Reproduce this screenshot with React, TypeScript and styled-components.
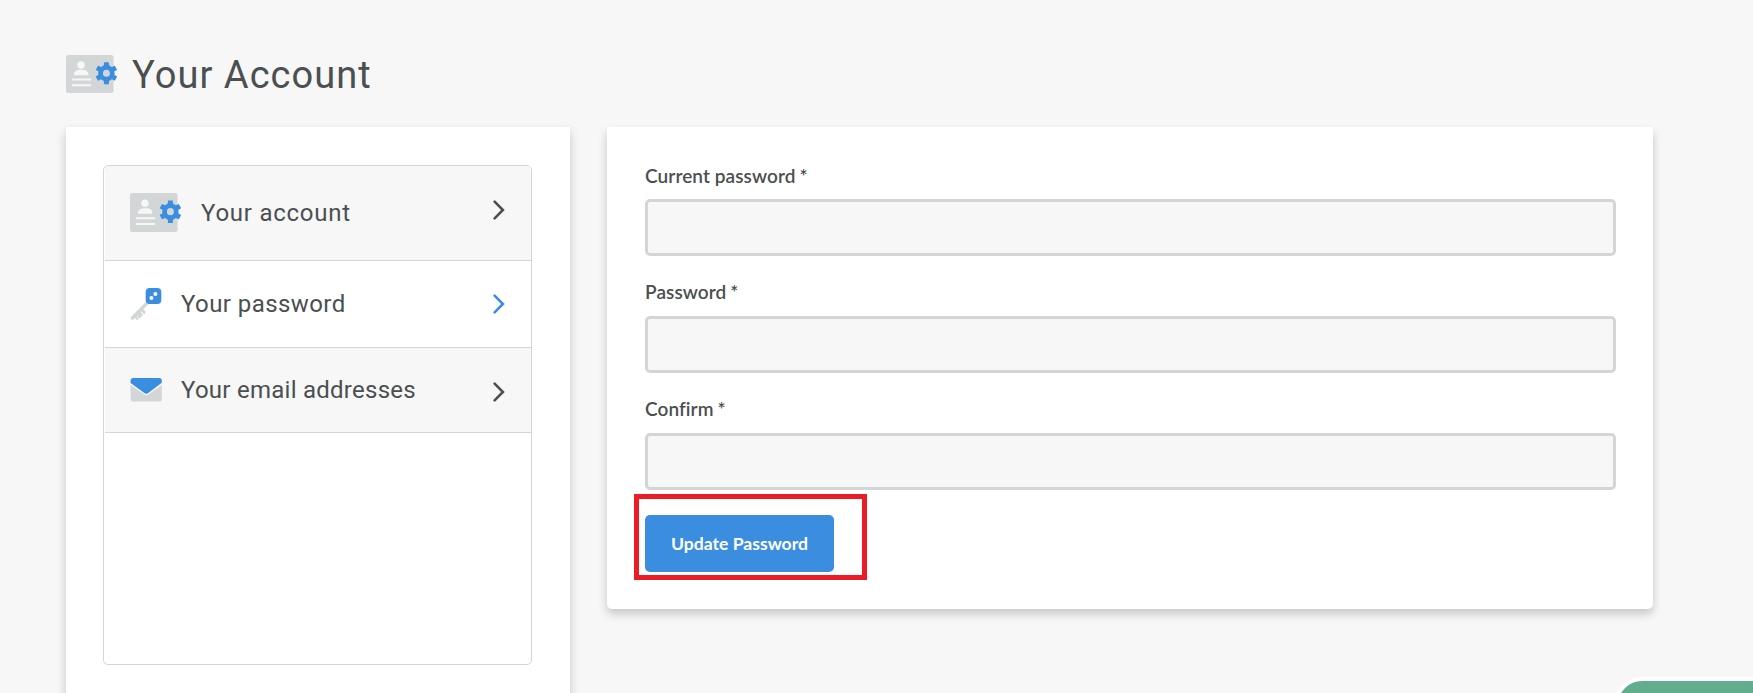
import React from 'react';
import styled, { createGlobalStyle } from 'styled-components';

const GlobalStyle = createGlobalStyle`
  * { box-sizing: border-box; }
  html, body { margin: 0; height: 100%; overflow: hidden; }
  body { background: #f7f7f7; color: #4a4f50; font-family: Lato, "Liberation Sans", sans-serif; }
`;

const Page = styled.main`
  height: 693px;
  padding: 55px 100px 0 66px;
  overflow: hidden;
`;

const Header = styled.header`
  display: flex;
  height: 72px;
  gap: 14px;
  align-items: flex-start;
`;

const Title = styled.h1`
  margin: -3px 0 0;
  font: 400 38px/47px Roboto, sans-serif;
  letter-spacing: 1.05px;
  white-space: nowrap;
`;

const Columns = styled.div`
  display: flex;
  align-items: flex-start;
  gap: 37px;
`;

const Panel = styled.section`
  background: #fff;
  box-shadow: 0 5px 10px rgba(0, 0, 0, 0.2);
`;

const SidePanel = styled(Panel)`
  width: 504px;
  height: 620px;
  padding: 38px 38px 0 37px;
`;

const FormPanel = styled(Panel)`
  flex: 1;
  height: 482px;
  padding: 38px 37px 0 38px;
  border-radius: 0 0 5px 5px;
`;

const Nav = styled.nav`
  height: 500px;
  border: 1px solid #d2d6d6;
  border-radius: 5px;
  padding-left: 1px;
  overflow: hidden;
`;

const NavItem = styled.a<{ $height: number; $active?: boolean }>`
  display: flex;
  align-items: center;
  height: ${(p) => p.$height}px;
  padding: 0 26px 0 25px;
  border-bottom: 1px solid #d2d6d6;
  background: ${(p) => (p.$active ? '#fff' : '#f7f7f7')};
`;

const NavLabel = styled.span<{ $gap: number; $spacing: number }>`
  flex: 1;
  margin-left: ${(p) => p.$gap}px;
  font: 400 24px/30px Roboto, sans-serif;
  letter-spacing: ${(p) => p.$spacing}px;
  white-space: nowrap;
`;

const Field = styled.label`
  display: flex;
  flex-direction: column;
  height: 117px;
`;

const FieldLabel = styled.span`
  height: 34px;
  font-size: 19px;
  font-weight: 600;
  line-height: 22px;
  letter-spacing: 0.08px;

  ${Field} + ${Field} > & {
    line-height: 20px;
  }
`;

const Required = styled.span`
  margin-left: 4px;
`;

const Input = styled.input`
  width: 100%;
  height: 57px;
  padding: 0 16px;
  border: 3px solid #d2d6d6;
  border-radius: 5px;
  background: #f7f7f7;
  font: inherit;
  outline: none;
`;

const Actions = styled.div`
  position: relative;
  width: max-content;
  margin-top: -1px;
`;

const Button = styled.button`
  display: block;
  width: 189px;
  height: 57px;
  padding: 0;
  border: 0;
  border-radius: 5px;
  background: #3b8ddf;
  color: #fff;
  font: 700 17.6px/22px Lato, sans-serif;
`;

const Highlight = styled.div`
  position: absolute;
  left: -11px;
  top: -21px;
  width: 233px;
  height: 86px;
  border: 5px solid #ed1c24;
  pointer-events: none;
`;

const ChatTab = styled.div`
  position: fixed;
  left: 1614px;
  top: 677px;
  width: 200px;
  height: 64px;
  border: 4px solid #fff;
  border-radius: 28px;
  background: #62ad8c;
`;

const Icon = styled.svg<{ $lift?: number }>`
  display: block;
  flex: none;
  margin-top: ${(p) => p.$lift ?? 0}px;
  overflow: visible;
`;

const AccountIcon = ({ height = 38, lift = 0 }: { height?: number; lift?: number }) => (
  <Icon $lift={lift} width="52" height={height} viewBox="0 0 52 38" preserveAspectRatio="none">
    <rect width="47.5" height="38" rx="2.5" fill="#d2d6d6" />
    <circle cx="15" cy="10" r="3.7" fill="#f7f7f7" />
    <path d="M8 20.2v-1c0-3 3-4.4 7.2-4.4s7.2 1.4 7.2 4.4v1z" fill="#f7f7f7" />
    <path d="M6.7 24.6h17.6M6.7 30.2h17.6" stroke="#f7f7f7" strokeWidth="2" strokeLinecap="round" />
    <g transform="translate(40.4 18.2)">
      {[0, 60, 120].map((a) => (
        <rect key={a} x="-2.5" y="-11" width="5" height="22" rx=".5" fill="#3b8ddf" transform={`rotate(${a})`} />
      ))}
      <circle r="8.2" fill="#3b8ddf" />
      <circle r="3.5" fill="#d2d6d6" />
    </g>
  </Icon>
);

const KeyIcon = () => (
  <Icon width="32" height="32" viewBox="-0.5 0 32 32">
    <path d="M17 14.6 1.9 30" stroke="#d2d6d6" strokeWidth="3.4" strokeLinecap="round" />
    <path d="m4.4 28.3 2.4 2.2" stroke="#d2d6d6" strokeWidth="2.6" strokeLinecap="round" />
    <path d="m5.5 26.5 3.5-3.5 3 3q.8.8 0 1.6l-2.1 2.1q-.7.6-1.4 0l-1-1z" fill="#d2d6d6" />
    <path d="m11 21.5 2.6 2.6" stroke="#d2d6d6" strokeWidth="3" strokeLinecap="round" />
    <rect x="15.2" y="0" width="15.6" height="16" rx="4" fill="#3b8ddf" />
    <circle cx="20.9" cy="9.9" r="2" fill="#fff" />
    <circle cx="24.9" cy="6" r="2" fill="#fff" />
  </Icon>
);

const MailIcon = () => (
  <Icon width="32" height="24" viewBox="-0.6 0 32 24">
    <path d="M0 7.1 14 16.7q1.7 1.2 3.4 0L31.2 7v14a2.6 2.6 0 0 1-2.6 2.6h-26A2.6 2.6 0 0 1 0 21z" fill="#d2d6d6" />
    <path d="M2.6 0h26a2.6 2.6 0 0 1 2.6 2.6v2.2L18 14.8q-2.3 1.7-4.6 0L0 5V2.6A2.6 2.6 0 0 1 2.6 0z" fill="#3b8ddf" />
  </Icon>
);

const Chevron = ({ color = '#4a4f50', lift = 0 }: { color?: string; lift?: number }) => (
  <Icon $lift={lift} width="12" height="20" viewBox="0 0 12 20">
    <path d="m1.6 1.7 8.3 8.3-8.3 8.3" fill="none" stroke={color} strokeWidth="2.6" strokeLinecap="round" />
  </Icon>
);

const FIELDS = ['Current password', 'Password', 'Confirm'];

export default function App() {
  return (
    <>
      <GlobalStyle />
      <Page>
        <Header>
          <AccountIcon />
          <Title>Your Account</Title>
        </Header>
        <Columns>
          <SidePanel>
            <Nav>
              <NavItem $height={95}>
                <AccountIcon height={39} lift={-2} />
                <NavLabel $gap={19} $spacing={0.75}>Your account</NavLabel>
                <Chevron lift={-7} />
              </NavItem>
              <NavItem $height={87} $active>
                <KeyIcon />
                <NavLabel $gap={19} $spacing={0.42}>Your password</NavLabel>
                <Chevron color="#3b8ddf" />
              </NavItem>
              <NavItem $height={85}>
                <MailIcon />
                <NavLabel $gap={19} $spacing={0.26}>Your email addresses</NavLabel>
                <Chevron lift={4} />
              </NavItem>
            </Nav>
          </SidePanel>
          <FormPanel>
            {FIELDS.map((label) => (
              <Field key={label}>
                <FieldLabel>
                  {label}
                  <Required>*</Required>
                </FieldLabel>
                <Input type="password" />
              </Field>
            ))}
            <Actions>
              <Button type="button">Update Password</Button>
              <Highlight />
            </Actions>
          </FormPanel>
        </Columns>
        <ChatTab />
      </Page>
    </>
  );
}
